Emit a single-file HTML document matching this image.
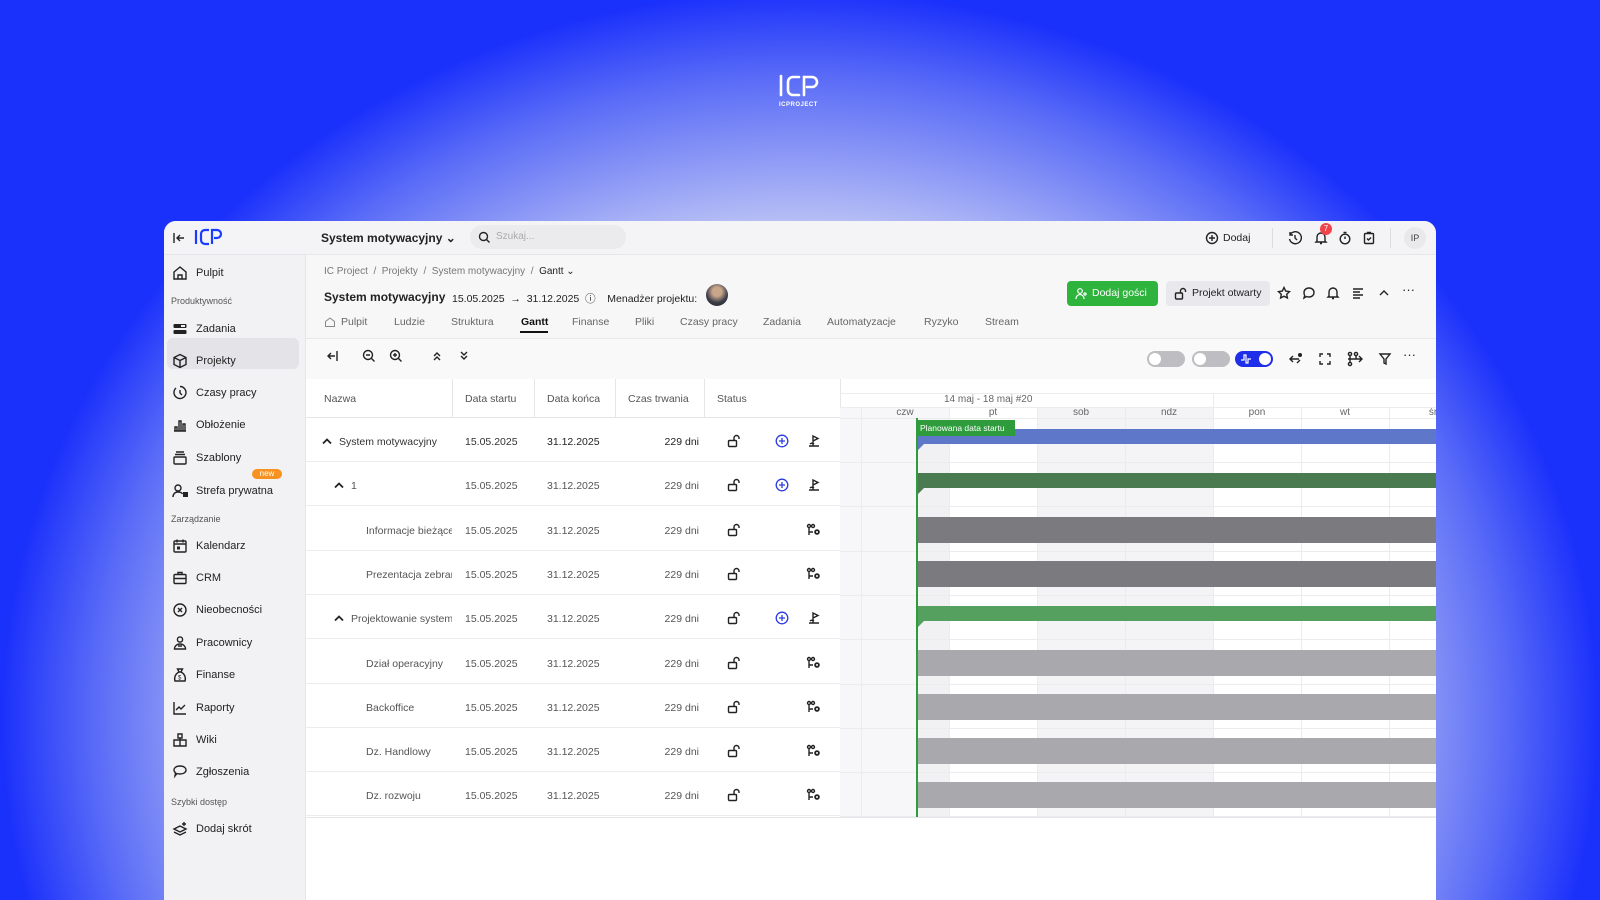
<!DOCTYPE html>
<html style="height:900px;background:#1a30fb"><head><meta charset="utf-8"><style>
*{box-sizing:border-box;margin:0;padding:0}
html{width:1600px;height:900px;overflow:hidden}
body{width:1600px;height:900px;overflow:hidden;font-family:"Liberation Sans",sans-serif;color:#222;position:relative;
background:radial-gradient(ellipse 800px 730px at 50% 80%,#ffffff 0%,#f2f3fd 45%,#b8c0f5 68%,#5a6cf7 88%,#1a30fb 100%) no-repeat,#1a30fb;}
.a{position:absolute}
.win{left:164px;top:221px;width:1272px;height:679px;background:#fff;border-radius:12px 12px 0 0;overflow:hidden}
.top{left:0;top:0;width:1272px;height:34px;background:#f4f4f6;border-bottom:1px solid #e6e6ea}
.side{left:0;top:34px;width:142px;height:645px;background:#f2f2f4;border-right:1px solid #e6e6ea}
.t{font-size:11px;white-space:nowrap}
.sl{font-size:9px;color:#555}
.ic{stroke:#222;fill:none;stroke-width:1.4}
.main{left:142px;top:34px;width:1130px;height:645px;background:#f7f7f8}
.tab{font-size:10.5px;color:#666}
.row{position:absolute;left:0;width:534px;height:44px;border-bottom:1px solid #ececef;font-size:10.5px}
.row span{position:absolute;top:18px;white-space:nowrap}
</style></head><body>
<svg class="a" style="left:778px;top:73px" width="44" height="36" viewBox="0 0 44 36"><g stroke="#fff" stroke-width="2.6" fill="none" stroke-linecap="round"><path d="M3 3v19"/><path d="M21 4h-6a5 5 0 0 0-5 5v8a5 5 0 0 0 5 5h6"/><path d="M26 22V4h8a5 5 0 0 1 0 10h-5"/></g><text x="1" y="33" fill="#fff" font-size="6" font-family="Liberation Sans" font-weight="bold" letter-spacing="0.5">ICPROJECT</text></svg>

<div class="a win">
 <div class="a top">
  <svg class="a" style="left:8px;top:10px" width="14" height="14" viewBox="0 0 14 14"><path class="ic" d="M2 2v10M12 7H5M8 4L5 7l3 3"/></svg>
  <svg class="a" style="left:30px;top:6px" width="30" height="20" viewBox="0 0 30 20"><g stroke="#1a3cff" stroke-width="2.2" fill="none"><path d="M2 3v14"/><path d="M15 3h-4a4 4 0 0 0-4 4v6a4 4 0 0 0 4 4h4"/><path d="M18 17V3h5a4 4 0 0 1 0 8h-3"/></g></svg>
  <div class="a t" style="left:157px;top:10px;font-size:12px;font-weight:bold">System motywacyjny ⌄</div>
  <div class="a" style="left:306px;top:4px;width:156px;height:24px;border-radius:12px;background:#ebebee"></div>
  <svg class="a" style="left:314px;top:10px" width="13" height="13" viewBox="0 0 13 13"><circle cx="5.5" cy="5.5" r="4" class="ic"/><path class="ic" d="M8.5 8.5l3 3"/></svg>
  <div class="a t" style="left:332px;top:10px;color:#aaa;font-size:10px">Szukaj...</div>
  <svg class="a" style="left:1041px;top:10px" width="14" height="14" viewBox="0 0 14 14"><circle cx="7" cy="7" r="5.5" class="ic"/><path class="ic" d="M7 4v6M4 7h6"/></svg>
  <div class="a t" style="left:1059px;top:11px;font-size:10.5px">Dodaj</div>
  <div class="a" style="left:1108px;top:7px;width:1px;height:20px;background:#ddd"></div>
  <svg class="a" style="left:1124px;top:10px" width="14" height="14" viewBox="0 0 14 14"><path class="ic" d="M2 4a6 6 0 1 1-0.5 4M2 1v3h3M7 4v3l2 2"/></svg>
  <svg class="a" style="left:1150px;top:10px" width="14" height="14" viewBox="0 0 14 14"><path class="ic" d="M3 10V6a4 4 0 0 1 8 0v4l1 1H2zM6 12.5h2"/></svg>
  <div class="a" style="left:1156px;top:2px;width:12px;height:12px;border-radius:6px;background:#f0444a;color:#fff;font-size:8px;text-align:center;line-height:12px">7</div>
  <svg class="a" style="left:1174px;top:10px" width="14" height="14" viewBox="0 0 14 14"><circle cx="7" cy="8" r="4.8" class="ic"/><path class="ic" d="M5.5 1.5h3M7 8V5.5"/></svg>
  <svg class="a" style="left:1198px;top:10px" width="14" height="14" viewBox="0 0 14 14"><rect x="2.5" y="2.5" width="9" height="10" rx="1" class="ic"/><path class="ic" d="M5 7.5l1.5 1.5L9 6.5M5 1.5h4"/></svg>
  <div class="a" style="left:1226px;top:7px;width:1px;height:20px;background:#ddd"></div>
  <div class="a" style="left:1240px;top:6px;width:22px;height:22px;border-radius:11px;background:#e9e9ec;font-size:9px;text-align:center;line-height:22px;color:#444">IP</div>
 </div>

 <div class="a side">
  <div class="a" style="left:3px;top:83px;width:132px;height:31px;border-radius:6px;background:#e4e4e8"></div>
  <svg class="a" style="left:8px;top:10px" width="16" height="16" viewBox="0 0 16 16"><path class="ic" d="M2 7l6-5 6 5v7H2zM6 14v-4h4v4"/></svg><div class="a t" style="left:32px;top:12px">Pulpit</div>
  <div class="a sl" style="left:7px;top:41px">Produktywność</div>
  <svg class="a" style="left:8px;top:66px" width="16" height="16" viewBox="0 0 16 16"><rect x="1.5" y="3" width="13" height="4" rx="1" fill="#222"/><rect x="1.5" y="9" width="13" height="4" rx="1" fill="#222"/><rect x="9" y="4" width="4" height="2" fill="#f2f2f4"/></svg><div class="a t" style="left:32px;top:68px">Zadania</div>
  <svg class="a" style="left:8px;top:98px" width="16" height="16" viewBox="0 0 16 16"><path class="ic" d="M8 1.5l6 3v7l-6 3-6-3v-7zM2 4.5l6 3 6-3M8 7.5v7"/></svg><div class="a t" style="left:32px;top:100px">Projekty</div>
  <svg class="a" style="left:8px;top:130px" width="16" height="16" viewBox="0 0 16 16"><path class="ic" d="M4 3a6 6 0 1 0 4-1.5M8 5v3l2 2"/></svg><div class="a t" style="left:32px;top:132px">Czasy pracy</div>
  <svg class="a" style="left:8px;top:162px" width="16" height="16" viewBox="0 0 16 16"><path class="ic" d="M2 14h12M3 14v-4h2v4M7 14V4h2v10M11 14V7h2v7"/></svg><div class="a t" style="left:32px;top:164px">Obłożenie</div>
  <svg class="a" style="left:8px;top:195px" width="16" height="16" viewBox="0 0 16 16"><rect x="2" y="7" width="12" height="7" rx="1" class="ic"/><path class="ic" d="M3 4.5h10M4 2h8"/></svg><div class="a t" style="left:32px;top:197px">Szablony</div>
  <svg class="a" style="left:8px;top:228px" width="18" height="16" viewBox="0 0 18 16"><circle cx="6" cy="5" r="3" class="ic"/><path class="ic" d="M1 14c0-3 2-5 5-5s4 1 4.5 2"/><rect x="11" y="9" width="5" height="5" fill="#222"/></svg><div class="a t" style="left:32px;top:230px">Strefa prywatna</div>
  <div class="a" style="left:88px;top:214px;width:30px;height:10px;border-radius:5px;background:#f7921e;color:#fff;font-size:8px;text-align:center;line-height:10px">new</div>
  <div class="a sl" style="left:7px;top:259px">Zarządzanie</div>
  <svg class="a" style="left:8px;top:283px" width="16" height="16" viewBox="0 0 16 16"><rect x="2" y="3" width="12" height="11" rx="1" class="ic"/><path class="ic" d="M2 6h12M5 1.5v3M11 1.5v3"/><rect x="5" y="8.5" width="3" height="3" fill="#222"/></svg><div class="a t" style="left:32px;top:285px">Kalendarz</div>
  <svg class="a" style="left:8px;top:315px" width="16" height="16" viewBox="0 0 16 16"><rect x="2" y="4.5" width="12" height="9" rx="1" class="ic"/><path class="ic" d="M6 4.5V2.5h4v2M2 8.5h12"/></svg><div class="a t" style="left:32px;top:317px">CRM</div>
  <svg class="a" style="left:8px;top:347px" width="16" height="16" viewBox="0 0 16 16"><circle cx="8" cy="8" r="6" class="ic"/><path class="ic" d="M6 6l4 4M10 6l-4 4"/></svg><div class="a t" style="left:32px;top:349px">Nieobecności</div>
  <svg class="a" style="left:8px;top:380px" width="16" height="16" viewBox="0 0 16 16"><circle cx="8" cy="4.5" r="2.6" class="ic"/><path class="ic" d="M2.5 14c0-3 2.5-5 5.5-5s5.5 2 5.5 5zM6 11h4"/></svg><div class="a t" style="left:32px;top:382px">Pracownicy</div>
  <svg class="a" style="left:8px;top:412px" width="16" height="16" viewBox="0 0 16 16"><path class="ic" d="M5.5 2h5l-1.5 3h-2zM7 5C3 7 2 11 3 14h10c1-3 0-7-4-9"/><text x="6" y="12.5" font-size="6" fill="#222">$</text></svg><div class="a t" style="left:32px;top:414px">Finanse</div>
  <svg class="a" style="left:8px;top:445px" width="16" height="16" viewBox="0 0 16 16"><path class="ic" d="M2 2v12h12M4 10l3-3 2 2 4-4"/></svg><div class="a t" style="left:32px;top:447px">Raporty</div>
  <svg class="a" style="left:8px;top:477px" width="16" height="16" viewBox="0 0 16 16"><path class="ic" d="M2 8h12v6H2zM8 8v6M6 2h4v4H6zM8 6v2"/></svg><div class="a t" style="left:32px;top:479px">Wiki</div>
  <svg class="a" style="left:8px;top:509px" width="16" height="16" viewBox="0 0 16 16"><path class="ic" d="M8 2c4 0 6 2 6 4s-2 4-6 4c-1 0-2 0-3-.5L3 12l.5-3C2.5 8 2 7 2 6c0-2 2-4 6-4z"/></svg><div class="a t" style="left:32px;top:511px">Zgłoszenia</div>
  <div class="a sl" style="left:7px;top:542px">Szybki dostęp</div>
  <svg class="a" style="left:8px;top:566px" width="16" height="16" viewBox="0 0 16 16"><path class="ic" d="M8 5L2 8l6 3 6-3zM2 11l6 3 6-3M12 1v4M10 3h4"/></svg><div class="a t" style="left:32px;top:568px">Dodaj skrót</div>
 </div>

 <div class="a main">
  <div class="a t" style="left:18px;top:11px;font-size:10px;color:#777">IC Project &nbsp;/&nbsp; Projekty &nbsp;/&nbsp; System motywacyjny &nbsp;/&nbsp; <span style="color:#222">Gantt ⌄</span></div>
  <div class="a t" style="left:18px;top:35px;font-size:12px;font-weight:bold">System motywacyjny</div>
  <div class="a t" style="left:146px;top:36px;font-size:10.5px">15.05.2025 &nbsp;→ &nbsp;31.12.2025 &nbsp;ⓘ &nbsp;&nbsp;&nbsp;Menadżer projektu:</div>
  <div class="a" style="left:400px;top:29px;width:22px;height:22px;border-radius:11px;background:radial-gradient(circle at 50% 35%,#c9a68a 25%,#3b3d4a 60%,#222 100%)"></div>
  <div class="a" style="left:761px;top:26px;width:91px;height:25px;border-radius:4px;background:#2eb33d;color:#fff;font-size:10.5px;line-height:25px;padding-left:25px">Dodaj gości</div>
  <svg class="a" style="left:769px;top:32px" width="13" height="13" viewBox="0 0 13 13"><circle cx="5" cy="4" r="2.3" stroke="#fff" fill="none" stroke-width="1.2"/><path d="M1 12c0-3 2-4.5 4-4.5s4 1.5 4 4.5M10 5v4M8 7h4" stroke="#fff" fill="none" stroke-width="1.2"/></svg>
  <div class="a" style="left:860px;top:26px;width:104px;height:25px;border-radius:4px;background:#e9e9ed;font-size:10.5px;line-height:25px;padding-left:26px">Projekt otwarty</div>
  <svg class="a" style="left:868px;top:32px" width="13" height="13" viewBox="0 0 13 13"><rect x="1.5" y="6" width="7" height="6" rx="1" class="ic" stroke-width="1.2"/><path class="ic" stroke-width="1.2" d="M6.5 6V4a2.5 2.5 0 0 1 5 0v1"/></svg>
  <svg class="a" style="left:971px;top:31px" width="14" height="14" viewBox="0 0 14 14"><path class="ic" d="M7 1.5l1.7 3.6 3.8.5-2.8 2.6.7 3.8L7 10.2 3.6 12l.7-3.8L1.5 5.6l3.8-.5z"/></svg>
  <svg class="a" style="left:996px;top:31px" width="14" height="14" viewBox="0 0 14 14"><path class="ic" d="M7 2c3 0 5 2 5 4.5S10 11 7 11c-1 0-1.5 0-2.5-.5L2 12l.7-2.5C2 8.5 2 7.5 2 6.5 2 4 4 2 7 2z"/></svg>
  <svg class="a" style="left:1020px;top:31px" width="14" height="14" viewBox="0 0 14 14"><path class="ic" d="M3 10V6a4 4 0 0 1 8 0v4l1 1H2zM6 12.5h2"/></svg>
  <svg class="a" style="left:1045px;top:31px" width="14" height="14" viewBox="0 0 14 14"><path class="ic" d="M2 3h10M2 6h7M2 9h10M2 12h7"/></svg>
  <svg class="a" style="left:1071px;top:31px" width="14" height="14" viewBox="0 0 14 14"><path class="ic" d="M3 9l4-4 4 4"/></svg>
  <div class="a t" style="left:1096px;top:27px;font-size:13px">···</div>
  <svg class="a" style="left:18px;top:61px" width="12" height="12" viewBox="0 0 12 12"><path d="M1.5 5.5L6 2l4.5 3.5V10.5h-9z" stroke="#888" fill="none"/></svg>
  <div class="a tab" style="left:35px;top:61px">Pulpit</div>
  <div class="a tab" style="left:88px;top:61px">Ludzie</div>
  <div class="a tab" style="left:145px;top:61px">Struktura</div>
  <div class="a tab" style="left:215px;top:61px;color:#111;font-weight:bold">Gantt</div>
  <div class="a" style="left:214px;top:76px;width:28px;height:2px;background:#111"></div>
  <div class="a tab" style="left:266px;top:61px">Finanse</div>
  <div class="a tab" style="left:329px;top:61px">Pliki</div>
  <div class="a tab" style="left:374px;top:61px">Czasy pracy</div>
  <div class="a tab" style="left:457px;top:61px">Zadania</div>
  <div class="a tab" style="left:521px;top:61px">Automatyzacje</div>
  <div class="a tab" style="left:618px;top:61px">Ryzyko</div>
  <div class="a tab" style="left:679px;top:61px">Stream</div>
  <div class="a" style="left:0;top:83px;width:1130px;height:1px;background:#e8e8ec"></div>
  <div class="a" style="left:0;top:84px;width:1130px;height:40px;background:#f9f9fa"></div>
  <svg class="a" style="left:20px;top:94px" width="14" height="14" viewBox="0 0 14 14"><path class="ic" d="M11 2v10M9 7H2M5 4L2 7l3 3"/></svg>
  <svg class="a" style="left:56px;top:94px" width="14" height="14" viewBox="0 0 14 14"><circle cx="6" cy="6" r="4.5" class="ic"/><path class="ic" d="M9.5 9.5l3 3M4 6h4"/></svg>
  <svg class="a" style="left:83px;top:94px" width="14" height="14" viewBox="0 0 14 14"><circle cx="6" cy="6" r="4.5" class="ic"/><path class="ic" d="M9.5 9.5l3 3M4 6h4M6 4v4"/></svg>
  <svg class="a" style="left:124px;top:94px" width="14" height="14" viewBox="0 0 14 14"><path class="ic" d="M4 7l3-3 3 3M4 11l3-3 3 3"/></svg>
  <svg class="a" style="left:151px;top:94px" width="14" height="14" viewBox="0 0 14 14"><path class="ic" d="M4 3l3 3 3-3M4 7l3 3 3-3"/></svg>
  <div class="a" style="left:841px;top:96px;width:38px;height:16px;border-radius:8px;background:#bdbdc2"></div><div class="a" style="left:843px;top:98px;width:12px;height:12px;border-radius:6px;background:#fff"></div>
  <div class="a" style="left:886px;top:96px;width:38px;height:16px;border-radius:8px;background:#bdbdc2"></div><div class="a" style="left:888px;top:98px;width:12px;height:12px;border-radius:6px;background:#fff"></div>
  <div class="a" style="left:929px;top:96px;width:38px;height:16px;border-radius:8px;background:#1f2ee8"></div><div class="a" style="left:953px;top:98px;width:12px;height:12px;border-radius:6px;background:#fff"></div>
  <svg class="a" style="left:934px;top:98px" width="14" height="12" viewBox="0 0 14 12"><path d="M1 7h3V2h2v8h2V6h3" stroke="#fff" fill="none" stroke-width="1.2"/></svg>
  <svg class="a" style="left:982px;top:96px" width="16" height="16" viewBox="0 0 16 16"><path class="ic" d="M2 8h9M5 5L2 8l3 3M9 12l3-3"/><circle cx="12" cy="4" r="2" fill="#222"/></svg>
  <svg class="a" style="left:1012px;top:97px" width="14" height="14" viewBox="0 0 14 14"><path class="ic" d="M2 5V2h3M9 2h3v3M12 9v3H9M5 12H2V9"/></svg>
  <svg class="a" style="left:1040px;top:96px" width="18" height="16" viewBox="0 0 18 16"><circle cx="4" cy="3" r="1.6" class="ic"/><circle cx="10" cy="3" r="1.6" class="ic"/><circle cx="4" cy="13" r="1.6" class="ic"/><path class="ic" d="M4 5v6M10 5v3H2M4 8h12M13 5l3 3-3 3"/></svg>
  <svg class="a" style="left:1072px;top:97px" width="14" height="14" viewBox="0 0 14 14"><path class="ic" d="M2 2h10L8 7v5l-2-1V7z"/></svg>
  <div class="a t" style="left:1097px;top:92px;font-size:13px">···</div>

  <div class="a" style="left:0;top:124px;width:535px;height:521px;background:#fff;border-right:1px solid #e6e6ea">
   <div class="a" style="left:0;top:0;width:535px;height:39px;border-bottom:1px solid #e6e6ea"></div>
   <div class="a" style="left:146px;top:0;width:1px;height:39px;background:#e6e6ea"></div>
   <div class="a" style="left:228px;top:0;width:1px;height:39px;background:#e6e6ea"></div>
   <div class="a" style="left:309px;top:0;width:1px;height:39px;background:#e6e6ea"></div>
   <div class="a" style="left:398px;top:0;width:1px;height:39px;background:#e6e6ea"></div>
   <div class="a t" style="left:18px;top:14px;font-size:10.5px;color:#555">Nazwa</div>
   <div class="a t" style="left:159px;top:14px;font-size:10.5px;color:#555">Data startu</div>
   <div class="a t" style="left:241px;top:14px;font-size:10.5px;color:#555">Data końca</div>
   <div class="a t" style="left:322px;top:14px;font-size:10.5px;color:#555">Czas trwania</div>
   <div class="a t" style="left:411px;top:14px;font-size:10.5px;color:#555">Status</div>
  </div>
 </div>
 <div class="a" style="left:677px;top:158px;width:595px;height:521px;background:#fff"></div>
</div>

<div id="rows" class="a" style="left:306px;top:418px;width:534px;height:400px"></div>
<div class="a" style="left:840px;top:393px;width:596px;height:1px;background:#ececef"></div>
<div class="a" style="left:1213px;top:393px;width:1px;height:14px;background:#ececef"></div>
<div class="a t" style="left:944px;top:394px;font-size:10px;color:#666">14 maj - 18 maj #20</div>
<div id="gantt" class="a" style="left:840px;top:407px;width:596px;height:411px;overflow:hidden"></div>
<div class="a" style="left:840px;top:818px;width:596px;height:82px;background:#fff"></div>
<div class="a" style="left:306px;top:817px;width:1130px;height:1px;background:#e6e6ea"></div>
<script>
(function(){
var rows=[["System motywacyjny",0,1,"proj"],["1",1,1,"proj"],["Informacje bieżące",2,0,"task"],["Prezentacja zebrań",2,0,"task"],["Projektowanie systemu",1,1,"proj"],["Dział operacyjny",2,0,"task"],["Backoffice",2,0,"task"],["Dz. Handlowy",2,0,"task"],["Dz. rozwoju",2,0,"task"]];
var h="",g="",lab="";
var days=["czw","pt","sob","ndz","pon","wt","śr"];
g+='<div class="a" style="left:0;top:0;width:21px;height:411px;background:#f7f7f9"></div>';
for(var d=0;d<7;d++){var x=21+d*88;var bg=(d==2||d==3)?"#f4f4f6":"#fff";if(d==0)bg="#f7f7f9";
g+='<div class="a" style="left:'+x+'px;top:0;width:88px;height:411px;background:'+bg+';border-left:1px solid #ececef"></div>';
lab+='<div class="a t" style="left:'+(x+24)+'px;top:0;width:40px;text-align:center;font-size:10px;color:#666">'+days[d]+'</div>';}
g+='<div class="a" style="left:76px;top:13px;width:33px;height:398px;background:#f1f1f4"></div>';
g+=lab;
g+='<div class="a" style="left:0;top:0;width:596px;height:1px;background:#ececef"></div>';
g+='<div class="a" style="left:0;top:11px;width:596px;height:1px;background:#ececef"></div>';
for(var i=0;i<9;i++){
var r=rows[i],ty=Math.round(i*44.3);
var pad=r[1]==0?16:(r[1]==1?28:60);
var bold=r[1]==0;
var col=bold?"#222":"#555";
h+='<div class="row" style="top:'+ty+'px;color:'+col+'">';
if(r[2]) h+='<svg class="a" style="left:'+pad+'px;top:19px" width="10" height="8" viewBox="0 0 10 8"><path d="M1 6.5l4-4 4 4" stroke="#222" stroke-width="1.8" fill="none"/></svg>';
var lx=r[2]?pad+17:pad;
h+='<span style="left:'+lx+'px;width:'+(146-lx)+'px;overflow:hidden;'+(bold?'color:#333':'')+'">'+r[0]+'</span>';
h+='<span style="left:159px;'+(bold?'color:#333;':'')+'">15.05.2025</span><span style="left:241px">31.12.2025</span><span style="left:336px;width:57px;text-align:right">229 dni</span>';
h+='<svg class="a" style="left:421px;top:16px" width="14" height="14" viewBox="0 0 14 14"><rect x="1.5" y="6.5" width="8" height="6" rx="1" class="ic"/><path class="ic" d="M7 6.5V4a2.5 2.5 0 0 1 5 0v1"/></svg>';
if(r[3]=="proj"){
h+='<svg class="a" style="left:469px;top:16px" width="14" height="14" viewBox="0 0 14 14"><circle cx="7" cy="7" r="5.8" stroke="#2a3be0" fill="none" stroke-width="1.3"/><path d="M7 4v6M4 7h6" stroke="#2a3be0" stroke-width="1.3"/></svg>';
h+='<svg class="a" style="left:501px;top:16px" width="14" height="14" viewBox="0 0 14 14"><path class="ic" d="M6 12V2l5 2.5-5 2.5M2 12h10M3 10c1-1 3-1 4 0"/></svg>';
} else h+='<svg class="a" style="left:500px;top:16px" width="16" height="14" viewBox="0 0 16 14"><circle cx="3" cy="3" r="1.5" class="ic"/><circle cx="7" cy="3" r="1.5" class="ic" /><path class="ic" d="M3 5v4h4M3 9v3"/><circle cx="11" cy="9" r="2.8" fill="#222"/><circle cx="11" cy="9" r="1" fill="#fff"/></svg>';
h+='</div>';
var gt=11+ty;
g+='<div class="a" style="left:0;top:'+(gt+44)+'px;width:596px;height:1px;background:#ececef"></div>';
if(r[3]=="proj"){var c=i==0?"#5f77c9":(i==1?"#4a7a4f":"#55a05e");
g+='<div class="a" style="left:76px;top:'+(gt+11)+'px;width:520px;height:15px;background:'+c+'"></div>';
g+='<svg class="a" style="left:76px;top:'+(gt+26)+'px" width="8" height="8"><path d="M0 0h8L0 8z" fill="'+c+'"/></svg>';}
else{var c2=i<4?"#7b7a7f":"#a9a8ad";g+='<div class="a" style="left:76px;top:'+(gt+10)+'px;width:520px;height:26px;background:'+c2+'"></div>';}
}
g+='<div class="a" style="left:76px;top:11px;width:2px;height:400px;background:#2e9c3c"></div>';
g+='<div class="a t" style="left:76px;top:13px;width:99px;height:16px;background:#2e9c3c;color:#fff;font-size:8.5px;line-height:16px;padding-left:4px">Planowana data startu</div>';
document.getElementById("rows").innerHTML=h;document.getElementById("gantt").innerHTML=g;
})();
</script>
</body></html>
